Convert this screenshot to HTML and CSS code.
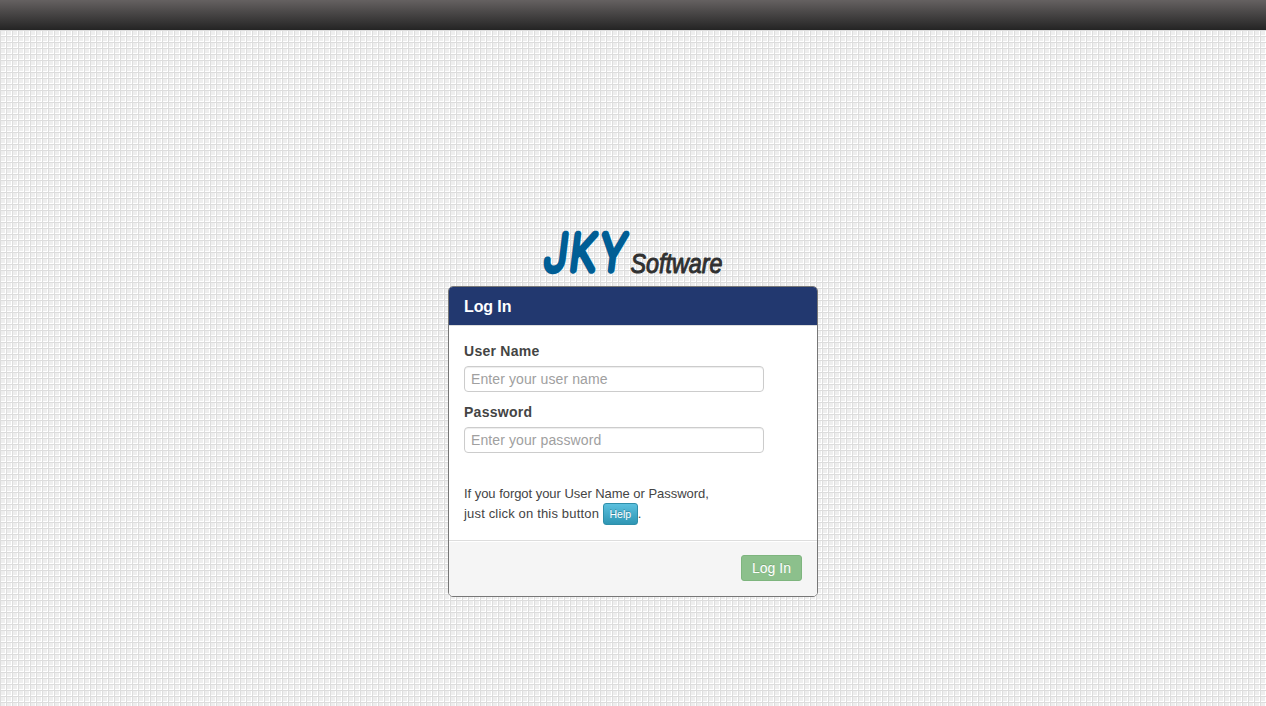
FILE: index.html
```
<!DOCTYPE html>
<html lang="en">
<head>
<meta charset="utf-8">
<title>JKY Software</title>
<link rel="stylesheet" href="styles.css">
</head>
<body>
<header class="navbar"></header>
<main class="login">
  <svg class="logo" width="190" height="56" viewBox="0 0 190 56" role="img" aria-label="JKY Software">
    <text class="logo-name" transform="translate(6.8 47) skewX(-7) scale(.78 1)" x="-1.5 31 70" y="0">JKY</text>
    <text class="logo-word" x="92.5" y="50" textLength="92" lengthAdjust="spacingAndGlyphs">Software</text>
  </svg>
  <form class="panel">
    <h1 class="panel-title">Log In</h1>
    <div class="panel-body">
      <label class="label" for="user">User Name</label>
      <input class="field" id="user" type="text" placeholder="Enter your user name">
      <label class="label" for="password">Password</label>
      <input class="field" id="password" type="password" placeholder="Enter your password">
      <p class="hint"><span class="hint-lead">If you forgot your User Name or Password,</span><br><span class="hint-action">just click on this button </span><button class="help" type="button">Help</button>.</p>
    </div>
    <footer class="panel-footer"><button class="submit" type="submit" disabled>Log In</button></footer>
  </form>
</main>
</body>
</html>
```
FILE: styles.css
```
* { box-sizing: border-box; }
body {
  margin: 0;
  min-height: 706px;
  font: 13px/20px "Liberation Sans", Arial, sans-serif;
  color: #444;
  background-color: #eee;
  background-image:
    linear-gradient(90deg, #ddd 1px, transparent 1px),
    linear-gradient(#ddd 1px, transparent 1px),
    linear-gradient(90deg, transparent 5px, #fff 5px),
    linear-gradient(transparent 5px, #fff 5px);
  background-size: 6px 6px;
}
.navbar { height: 30px; background: linear-gradient(#656161, #242424); }
.login { width: 370px; margin: 0 auto; padding-top: 193px; }
.logo { display: block; margin: 0 auto 7px; overflow: visible; }
.logo-name {
  font: 100 50px Roboto, Lato, Arial, sans-serif;
  fill: #005e95;
  stroke: #005e95;
  stroke-width: 6.6px;
  stroke-linejoin: round;
  vector-effect: non-scaling-stroke;
}
.logo-word { font: italic 27px "Liberation Sans", Arial, sans-serif; fill: #303030; stroke: #303030; stroke-width: 1px; stroke-linejoin: round; }
.panel { height: 311px; display: flex; flex-direction: column; border: 1px solid #777; border-radius: 5px; background: #fff; overflow: hidden; }
.panel-title { margin: 0; height: 38px; padding: 1px 15px 0; font-size: 16px; line-height: 38px; letter-spacing: -.1px; color: #fff; background: #22386f; }
.panel-body { flex: 1; padding: 15px 15px 0; border-top: 1px solid #ddd; }
.label { display: block; height: 20px; margin-bottom: 5px; font-size: 14px; font-weight: bold; letter-spacing: .27px; }
.field { display: block; width: 300px; height: 26px; margin: 0 0 10px; padding: 0 6px; border: 1px solid #ccc; border-radius: 4px; background: #fff; box-shadow: inset 0 1px 1px rgba(0,0,0,.075); font: 14px "Liberation Sans", Arial, sans-serif; letter-spacing: .1px; }
.field::placeholder { color: #a0a0a0; opacity: 1; }
.hint { margin: 31px 0 0; }
.hint-lead { letter-spacing: -.04px; }
.hint-action { letter-spacing: .17px; }
.help { width: 35px; height: 22px; margin-top: -2px; padding: 0; border: 1px solid #2f8faa; border-radius: 3px; background: linear-gradient(#5bc0de, #2f96b4); color: #fff; font: 10.5px "Liberation Sans", Arial, sans-serif; text-shadow: 0 -1px 0 rgba(0,0,0,.25); vertical-align: middle; }
.panel-footer { height: 56px; display: flex; justify-content: flex-end; padding: 14px 15px; background: #f5f5f5; border-top: 1px solid #ddd; box-shadow: inset 0 1px 0 #fff; }
.submit { width: 61px; height: 26px; padding: 0; border: 1px solid #7eb57e; border-radius: 3px; background: #8cc08c; color: #fff; font: 14px "Liberation Sans", Arial, sans-serif; text-shadow: 0 -1px 0 rgba(0,0,0,.15); }
```
